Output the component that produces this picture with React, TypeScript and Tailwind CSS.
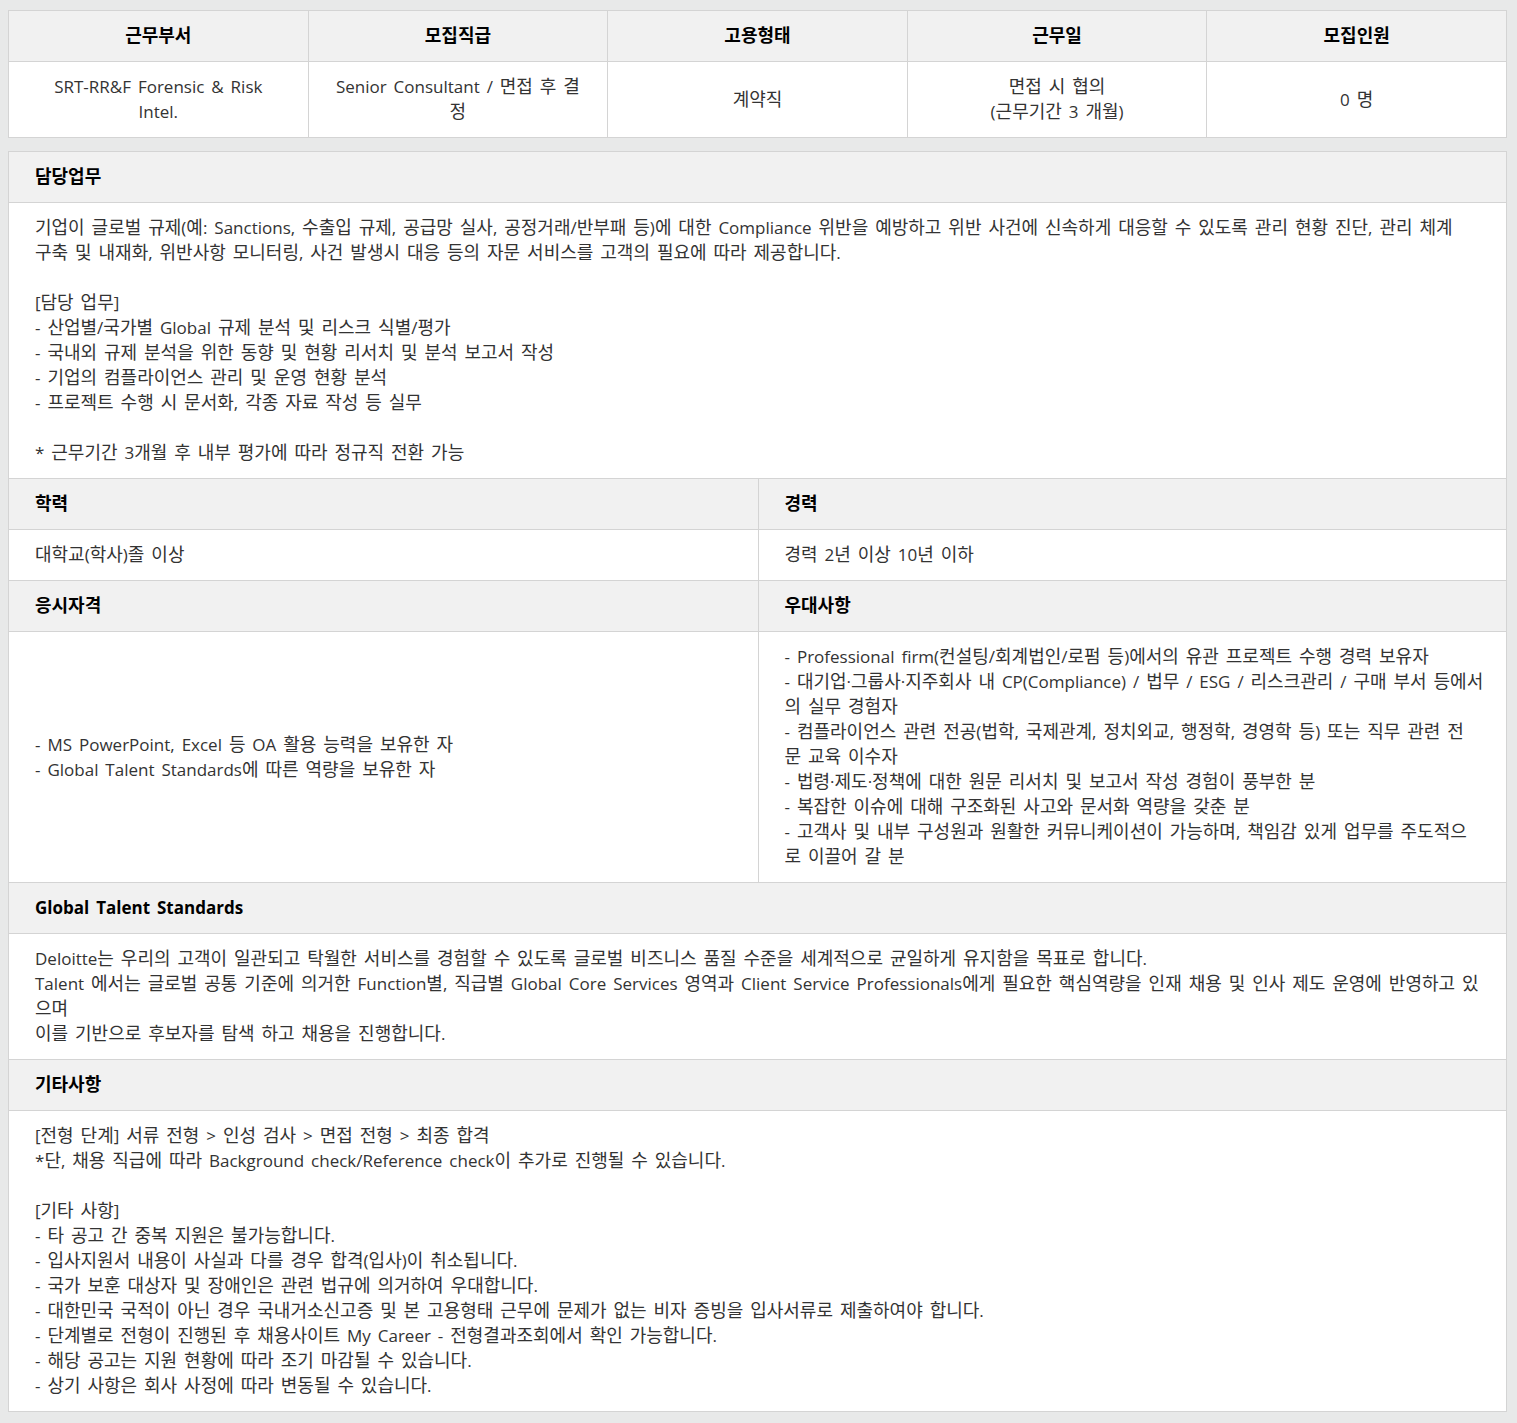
const font = "font-['Open_Sans','Noto_Sans_CJK_KR',sans-serif]";

// Hangul runs are set a touch larger than the Latin text, as on the source page
function Word({ w }: { w: string }) {
  const parts = w.split(/([\uAC00-\uD7A3]+)/).filter(Boolean);
  return (
    <span>
      {parts.map((p, i) =>
        /[\uAC00-\uD7A3]/.test(p) ? (
          <span key={i} className="text-[18px]">
            {p}
          </span>
        ) : (
          <span key={i}>{p}</span>
        )
      )}
    </span>
  );
}

function T({ t, nowrap }: { t: string; nowrap?: boolean }) {
  return (
    <>
      {t.split("\n").map((line, i) =>
        line === "" ? (
          <div key={i} className="h-[25px]" />
        ) : (
          <div key={i} className={nowrap ? "whitespace-nowrap" : ""}>
            {line.split(/(\s+)/).map((w, j) => (/^\s+$/.test(w) ? " " : <Word key={j} w={w} />))}
          </div>
        )
      )}
    </>
  );
}

const summary = [
  { label: "근무부서", value: "SRT-RR&F Forensic & Risk Intel." },
  { label: "모집직급", value: "Senior Consultant / 면접 후 결\n정" },
  { label: "고용형태", value: "계약직" },
  { label: "근무일", value: "면접 시 협의\n(근무기간 3 개월)" },
  { label: "모집인원", value: "0 명" },
];

const duty = `기업이 글로벌 규제(예: Sanctions, 수출입 규제, 공급망 실사, 공정거래/반부패 등)에 대한 Compliance 위반을 예방하고 위반 사건에 신속하게 대응할 수 있도록 관리 현황 진단, 관리 체계 구축 및 내재화, 위반사항 모니터링, 사건 발생시 대응 등의 자문 서비스를 고객의 필요에 따라 제공합니다.

[담당 업무]
- 산업별/국가별 Global 규제 분석 및 리스크 식별/평가
- 국내외 규제 분석을 위한 동향 및 현황 리서치 및 분석 보고서 작성
- 기업의 컴플라이언스 관리 및 운영 현황 분석
- 프로젝트 수행 시 문서화, 각종 자료 작성 등 실무

* 근무기간 3개월 후 내부 평가에 따라 정규직 전환 가능`;

const qualification = `- MS PowerPoint, Excel 등 OA 활용 능력을 보유한 자
- Global Talent Standards에 따른 역량을 보유한 자`;

const preferred = `- Professional firm(컨설팅/회계법인/로펌 등)에서의 유관 프로젝트 수행 경력 보유자
- 대기업·그룹사·지주회사 내 CP(Compliance) / 법무 / ESG / 리스크관리 / 구매 부서 등에서
의 실무 경험자
- 컴플라이언스 관련 전공(법학, 국제관계, 정치외교, 행정학, 경영학 등) 또는 직무 관련 전
문 교육 이수자
- 법령·제도·정책에 대한 원문 리서치 및 보고서 작성 경험이 풍부한 분
- 복잡한 이슈에 대해 구조화된 사고와 문서화 역량을 갖춘 분
- 고객사 및 내부 구성원과 원활한 커뮤니케이션이 가능하며, 책임감 있게 업무를 주도적으
로 이끌어 갈 분`;

const gts = `Deloitte는 우리의 고객이 일관되고 탁월한 서비스를 경험할 수 있도록 글로벌 비즈니스 품질 수준을 세계적으로 균일하게 유지함을 목표로 합니다.
Talent 에서는 글로벌 공통 기준에 의거한 Function별, 직급별 Global Core Services 영역과 Client Service Professionals에게 필요한 핵심역량을 인재 채용 및 인사 제도 운영에 반영하고 있
으며
이를 기반으로 후보자를 탐색 하고 채용을 진행합니다.`;

const etc = `[전형 단계] 서류 전형 > 인성 검사 > 면접 전형 > 최종 합격
*단, 채용 직급에 따라 Background check/Reference check이 추가로 진행될 수 있습니다.

[기타 사항]
- 타 공고 간 중복 지원은 불가능합니다.
- 입사지원서 내용이 사실과 다를 경우 합격(입사)이 취소됩니다.
- 국가 보훈 대상자 및 장애인은 관련 법규에 의거하여 우대합니다.
- 대한민국 국적이 아닌 경우 국내거소신고증 및 본 고용형태 근무에 문제가 없는 비자 증빙을 입사서류로 제출하여야 합니다.
- 단계별로 전형이 진행된 후 채용사이트 My Career - 전형결과조회에서 확인 가능합니다.
- 해당 공고는 지원 현황에 따라 조기 마감될 수 있습니다.
- 상기 사항은 회사 사정에 따라 변동될 수 있습니다.`;

function Head({ t, border }: { t: string; border?: boolean }) {
  return (
    <div
      className={`bg-[#f1f1f1] px-[26px] pt-[12px] pb-[13px] font-bold text-black border-b border-[#d4d4d4] ${
        border ? "border-l" : ""
      }`}
    >
      <T t={t} />
    </div>
  );
}

function Body({
  t,
  border,
  center,
  pr,
  nowrap,
}: {
  t: string;
  border?: boolean;
  center?: boolean;
  pr?: string;
  nowrap?: boolean;
}) {
  return (
    <div
      className={`bg-white pl-[26px] ${pr ?? "pr-[26px]"} pt-[12px] pb-[13px] text-[#333] border-b border-[#d4d4d4] ${
        border ? "border-l" : ""
      } ${center ? "flex flex-col justify-center" : ""}`}
    >
      <div>
        <T t={t} nowrap={nowrap} />
      </div>
    </div>
  );
}

export default function App() {
  return (
    <div
      className={`min-h-screen bg-[#e8e9e9] pt-[10px] pb-[12px] pl-[8px] text-[17px] leading-[25px] [word-spacing:2.5px] ${font}`}
    >
      <div className="w-[1499px] grid grid-cols-5 border-t border-l border-[#d4d4d4]">
        {summary.map((s) => (
          <div
            key={s.label}
            className="bg-[#f1f1f1] text-center font-bold text-black pt-[12px] pb-[13px] border-r border-b border-[#d4d4d4]"
          >
            <T t={s.label} />
          </div>
        ))}
        {summary.map((s) => (
          <div
            key={s.label + "v"}
            className="bg-white text-center text-[#333] px-[26px] pt-[12px] pb-[13px] flex items-center justify-center border-r border-b border-[#d4d4d4]"
          >
            <div>
              <T t={s.value} />
            </div>
          </div>
        ))}
      </div>

      <div className="mt-[13px] w-[1499px] border-t border-l border-r border-[#d4d4d4]">
        <Head t="담당업무" />
        <Body t={duty} pr="pr-[34px]" />

        <div className="grid grid-cols-2">
          <Head t="학력" />
          <Head t="경력" border />
          <Body t="대학교(학사)졸 이상" />
          <Body t="경력 2년 이상 10년 이하" border />
          <Head t="응시자격" />
          <Head t="우대사항" border />
          <Body t={qualification} center />
          <Body t={preferred} border nowrap />
        </div>

        <Head t="Global Talent Standards" />
        <Body t={gts} nowrap />
        <Head t="기타사항" />
        <Body t={etc} />
      </div>
    </div>
  );
}
